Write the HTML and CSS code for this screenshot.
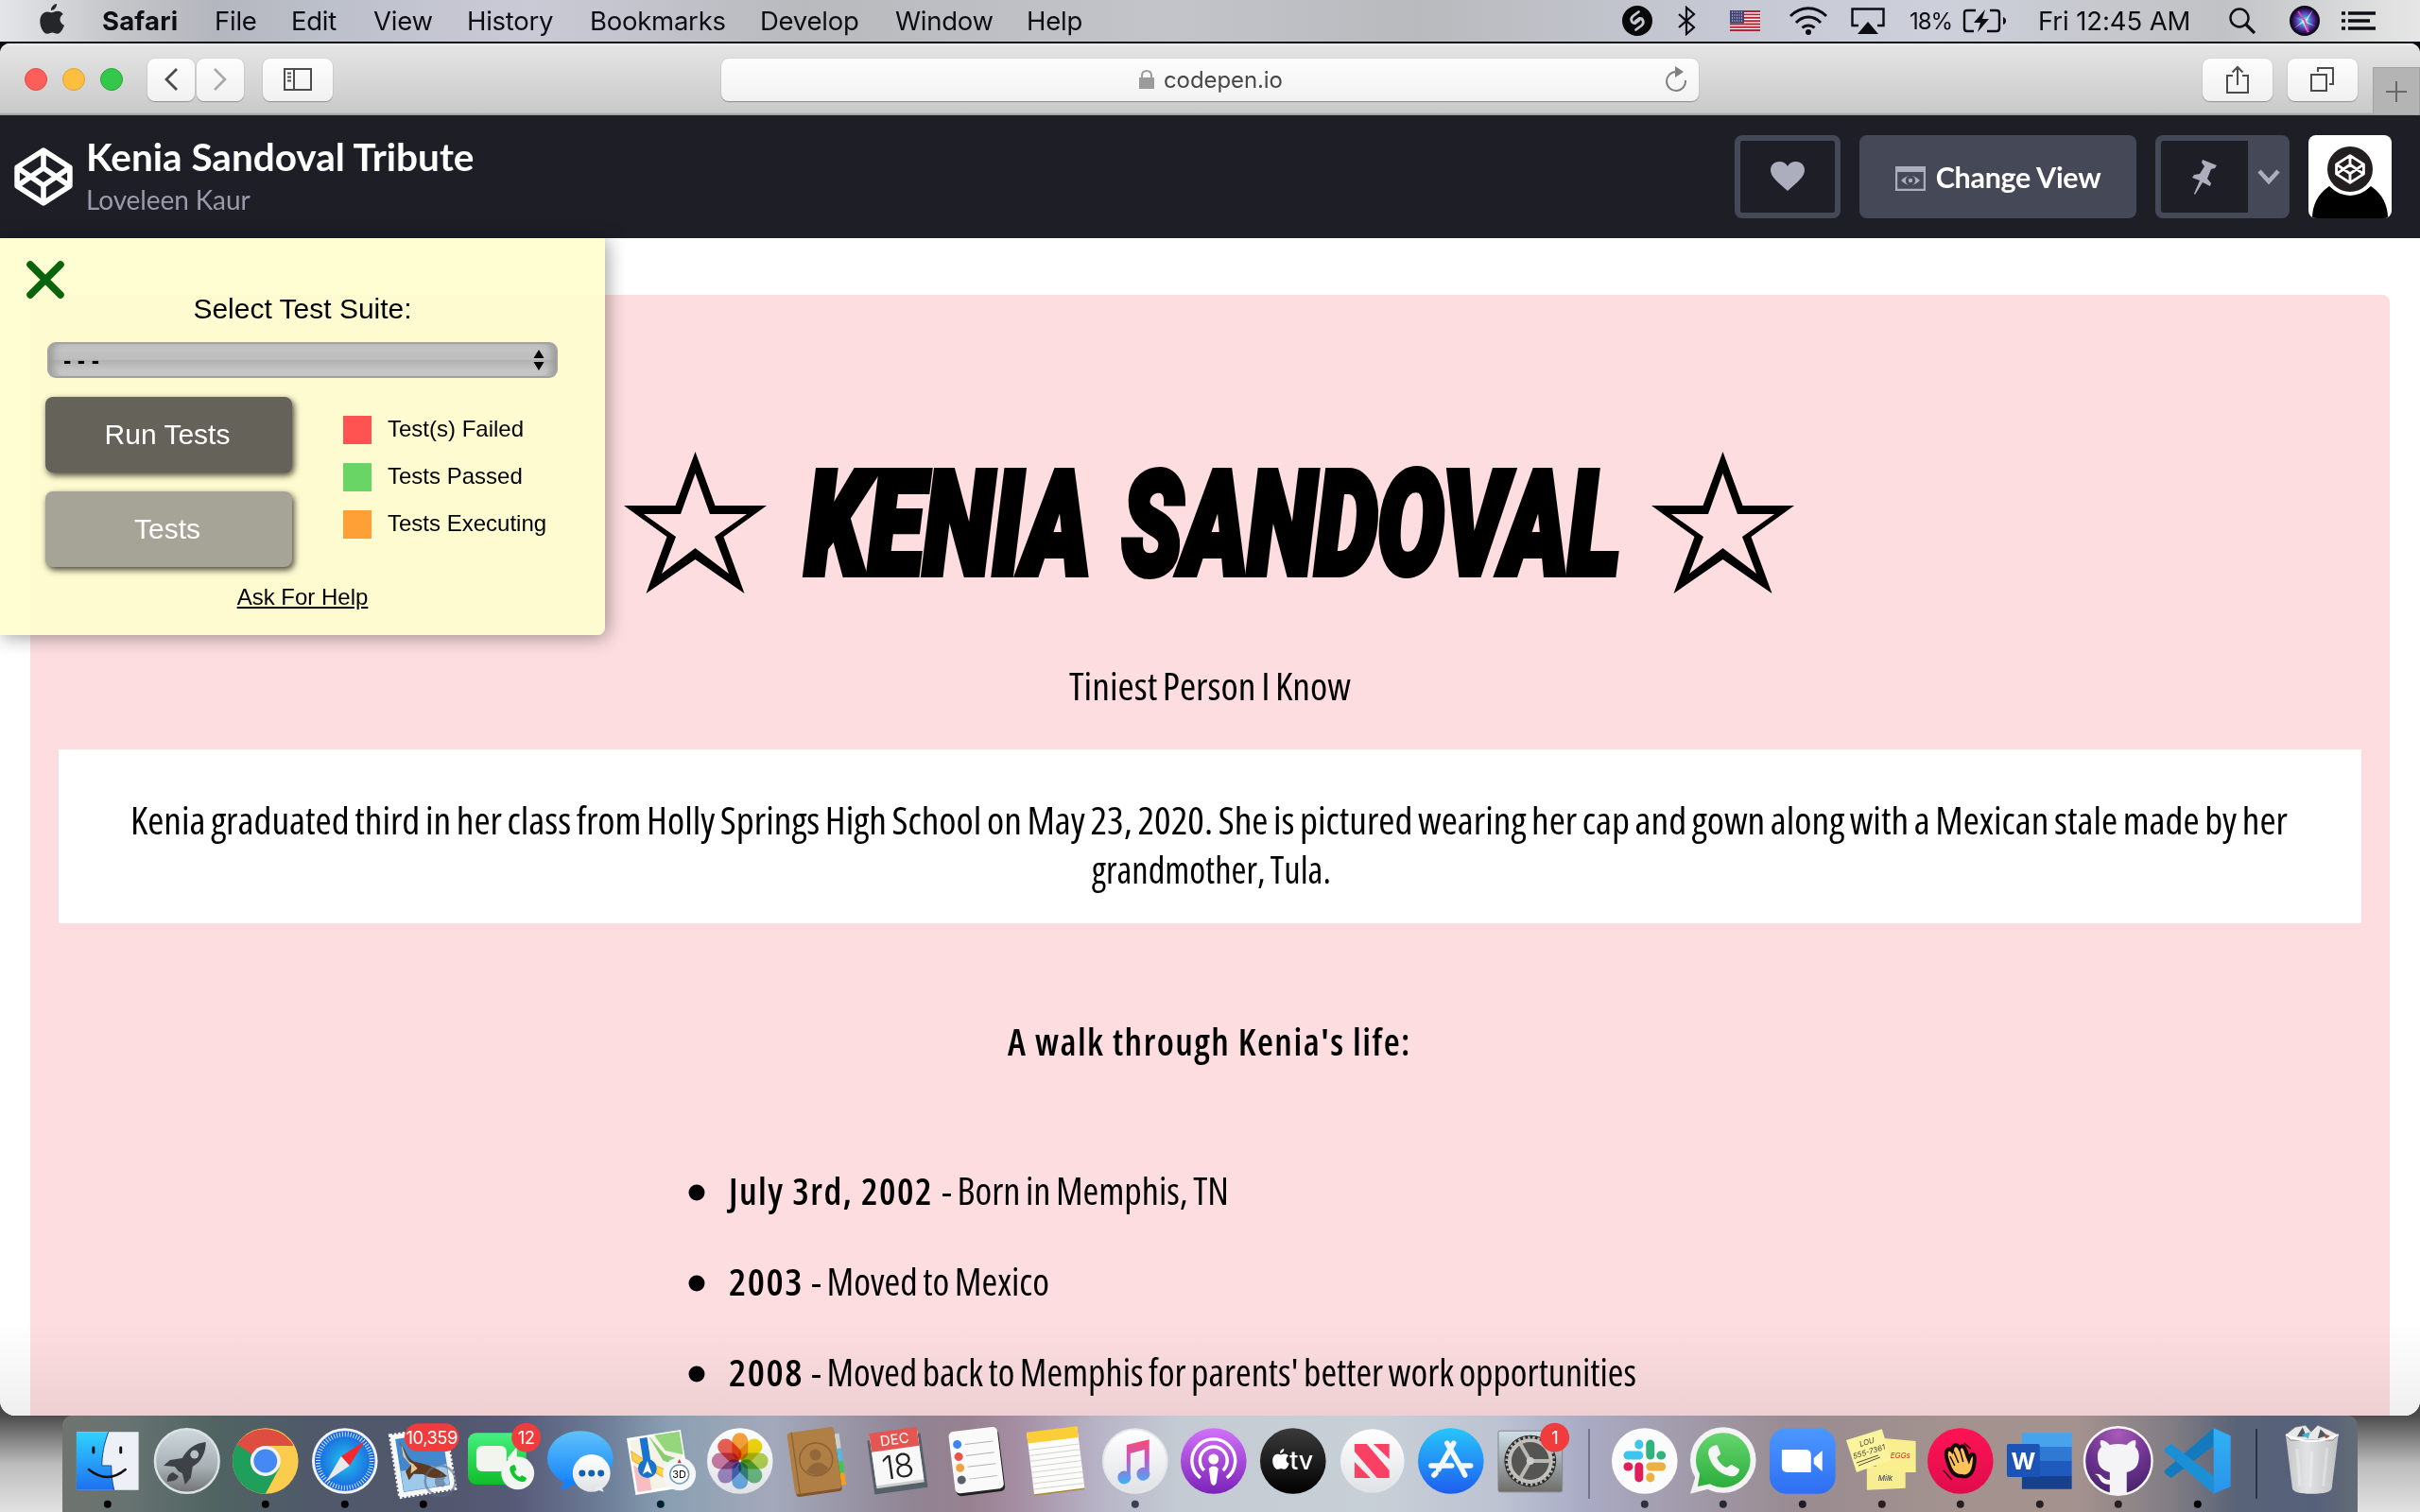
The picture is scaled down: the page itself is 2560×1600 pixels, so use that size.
FILE: index.html
```html
<!DOCTYPE html>
<html lang="en">
<head>
<meta charset="utf-8">
<title>Kenia Sandoval Tribute</title>
<link rel="stylesheet" href="styles.css">
</head>
<body>
<svg width="0" height="0" class="defs">
  <defs>
    <linearGradient id="gSilver" x2="0" y2="1"><stop offset="0" stop-color="#ced9de"/><stop offset=".6" stop-color="#a7b0b4"/><stop offset="1" stop-color="#707274"/></linearGradient>
    <linearGradient id="gFinder" x2="0" y2="1"><stop offset="0" stop-color="#2fd3ff"/><stop offset="1" stop-color="#1e70f0"/></linearGradient>
    <linearGradient id="gWhite" x2="0" y2="1"><stop offset="0" stop-color="#fff"/><stop offset="1" stop-color="#dfe2e6"/></linearGradient>
    <radialGradient id="gSafari"><stop offset="0" stop-color="#22c5ee"/><stop offset="1" stop-color="#1a5fdc"/></radialGradient>
    <linearGradient id="gGreen" x2="0" y2="1"><stop offset="0" stop-color="#45f080"/><stop offset="1" stop-color="#10bd28"/></linearGradient>
    <linearGradient id="gBlue" x2="0" y2="1"><stop offset="0" stop-color="#5fc2fb"/><stop offset="1" stop-color="#1482fb"/></linearGradient>
    <linearGradient id="gStore" x2="0" y2="1"><stop offset="0" stop-color="#28c6fb"/><stop offset="1" stop-color="#1d5df0"/></linearGradient>
    <linearGradient id="gPod" x2="0" y2="1"><stop offset="0" stop-color="#d272fa"/><stop offset="1" stop-color="#7b22b8"/></linearGradient>
    <linearGradient id="gTv" x2="0" y2="1"><stop offset="0" stop-color="#3b3b3b"/><stop offset="1" stop-color="#000"/></linearGradient>
    <linearGradient id="gNote" x2="0" y2="1"><stop offset="0" stop-color="#fb4b70"/><stop offset=".45" stop-color="#c158c8"/><stop offset="1" stop-color="#3db2f5"/></linearGradient>
    <linearGradient id="gPref" x2="0" y2="1"><stop offset="0" stop-color="#cfe0ea"/><stop offset="1" stop-color="#6f6d69"/></linearGradient>
    <linearGradient id="gZoom" x2="0" y2="1"><stop offset="0" stop-color="#4b98ff"/><stop offset="1" stop-color="#2e6ff3"/></linearGradient>
    <linearGradient id="gWa" x2="0" y2="1"><stop offset="0" stop-color="#65d56f"/><stop offset="1" stop-color="#2cae3c"/></linearGradient>
    <linearGradient id="gHey" x2="0" y2="1"><stop offset="0" stop-color="#ff1355"/><stop offset="1" stop-color="#e00c4c"/></linearGradient>
    <radialGradient id="gGit" cy=".1" r="1"><stop offset="0" stop-color="#a95bb8"/><stop offset=".5" stop-color="#6d3390"/><stop offset="1" stop-color="#3c2060"/></radialGradient>
    <linearGradient id="gCode" x2="0" y2="1"><stop offset="0" stop-color="#2fb2f5"/><stop offset="1" stop-color="#2c93ea"/></linearGradient>
    <linearGradient id="gTrash"><stop offset="0" stop-color="#c9caca"/><stop offset=".4" stop-color="#eaeaea"/><stop offset="1" stop-color="#c6c6c6"/></linearGradient>
    <radialGradient id="gSiri"><stop offset="0" stop-color="#bff"/><stop offset=".3" stop-color="#3aa4d8"/><stop offset=".65" stop-color="#5a2aa8"/><stop offset="1" stop-color="#0a0820"/></radialGradient>
    <symbol id="cp" viewBox="0 0 100 100"><path d="M50 5 95 34V66L50 95 5 66V34ZM50 5V35M50 65V95M5 34 50 65 95 34M5 66 50 35 95 66" fill="none" stroke="currentColor" stroke-width="9" stroke-linejoin="round"/></symbol>
    <symbol id="apple" viewBox="0 0 26 32"><path d="M18 0c.3 3.500-2.500 7-6 7C11.600 3.500 14.800.5 18 0ZM13 9.300c1.500 0 3-1.500 6-1.500 2.200 0 4.500 1.200 5.800 3.300-5 3-4.200 9.600 1.200 11.600-1.300 4-4.300 9.100-7.300 9.100-2 0-3-1.300-5.300-1.300s-3.500 1.300-5.300 1.300C4 31.800.3 24.500.3 18.400c0-6.300 3.800-10 7.700-10 2.200 0 3.700.9 5 .9Z" fill="currentColor"/></symbol>
    <symbol id="phone" viewBox="0 0 40 40"><path d="M7 4 12 2c1 0 2 1 3 4l2 6c0 2-4 3-4 5 2 5 6 9 11 11 2 0 4-4 6-3l7 4c2 1 2 2 1 4-2 4-5 6-10 5C14 35 5 24 3 12c0-4 1-6 4-8Z" fill="currentColor"/></symbol>
  </defs>
</svg>

<header class="menubar">
  <svg class="apple" viewBox="0 0 26 32"><use href="#apple"/></svg>
  <nav class="menus"><b>Safari</b><span>File</span><span>Edit</span><span>View</span><span>History</span><span>Bookmarks</span><span>Develop</span><span>Window</span><span>Help</span></nav>
  <div class="status">
    <svg class="shazam" viewBox="0 0 32 32"><circle cx="16" cy="16" r="16" fill="#08080b"/><path d="M17.500 6.500 11.500 11C8 14 10 19 14 18.500L18 15.500M14.500 25.500 20.500 21C24 18 22 13 18 13.500L14 16.500" fill="none" stroke="#c5c8d2" stroke-width="2.800" stroke-linecap="round"/></svg>
    <svg class="bt" viewBox="0 0 20 32"><path d="M2 9 18 23 10 30V2L18 9 2 23" fill="none" stroke="#0c0e14" stroke-width="2.200"/></svg>
    <svg class="flag" viewBox="0 0 32 22"><path d="M0 0H32V22H0Z" fill="#fff"/><path d="M0 1H32M0 4.400H32M0 7.800H32M0 11.200H32M0 14.500H32M0 17.800H32M0 21H32" stroke="#b22234" stroke-width="1.900"/><path d="M0 0H15V13.600H0Z" fill="#3f4275"/><path d="M2 2H14M2 5H14M2 8H14M2 11H14" stroke="#fff" stroke-width="1.200" stroke-dasharray="1 1.500"/></svg>
    <svg class="wifi" viewBox="0 0 42 30"><path d="M2 10C13-1 29-1 40 10M8 17C15.500 9 26.500 9 34 17M14.500 22.500C18 19 24 19 27.500 22.500" fill="none" stroke="#0c0e14" stroke-width="3"/><circle cx="21" cy="27" r="3" fill="#0c0e14"/></svg>
    <svg class="air" viewBox="0 0 36 29"><path d="M8 19H1.500V1.500H34.500V19H28" fill="none" stroke="#0c0e14" stroke-width="2.400"/><path d="M18 15 29 28H7Z" fill="#0c0e14"/></svg>
    <span class="pct">18%</span>
    <svg class="batt" viewBox="0 0 46 26"><path d="M14 2H5Q2 2 2 5V21Q2 24 5 24H12M29 2H36Q39 2 39 5V21Q39 24 36 24H26" fill="none" stroke="#0c0e14" stroke-width="2.400"/><path d="M43 9Q46 10 46 13T43 17Z" fill="#0c0e14"/><path d="M24 1 12 15H19L16 25 28 11H21Z" fill="#0c0e14"/></svg>
    <span class="clock">Fri 12:45 AM</span>
    <svg class="mag" viewBox="0 0 28 28"><circle cx="11" cy="11" r="9.500" fill="none" stroke="#0c0e14" stroke-width="2.400"/><path d="M18 18 27 27" stroke="#0c0e14" stroke-width="3.200"/></svg>
    <svg class="siri" viewBox="0 0 32 32"><circle cx="16" cy="16" r="16" fill="#111"/><circle cx="16" cy="16" r="14.500" fill="url(#gSiri)"/><path d="M4 12 16 16 25 4 18 17 28 22 17 18 19 29 14 18 5 24 14 16Z" fill="#e8f8ff" opacity=".8"/><path d="M9 6 16 16 20 28" stroke="#e83fa8" stroke-width="2" fill="none"/></svg>
    <svg class="list" viewBox="0 0 36 20"><path d="M0 2H4M7 2H36M0 10H4M7 10H30M0 18H4M7 18H36" stroke="#0c0e14" stroke-width="3.600"/></svg>
  </div>
</header>

<main class="window">
  <div class="toolbar">
    <div class="lights"><i class="red"></i><i class="yellow"></i><i class="green"></i></div>
    <div class="navs">
      <div class="btn nav"><svg width="16" height="26" viewBox="0 0 16 26"><path d="M14 2 3 13 14 24" fill="none" stroke="#4a4a4a" stroke-width="2.800"/></svg></div>
      <div class="btn nav"><svg width="16" height="26" viewBox="0 0 16 26"><path d="M2 2 13 13 2 24" fill="none" stroke="#a9a9a9" stroke-width="2.600"/></svg></div>
    </div>
    <div class="btn side"><svg width="30" height="24" viewBox="0 0 30 24"><path d="M1 1H29V23H1ZM11 1V23M4 5.500H8M4 9.500H8M4 13.500H8" fill="none" stroke="#4c4c4c" stroke-width="2"/></svg></div>
    <div class="address">
      <svg class="lock" viewBox="0 0 16 20"><path d="M3 9V6Q3 1 8 1T13 6V9" fill="none" stroke="#9b9b9b" stroke-width="2"/><path d="M0 8H16V20H0Z" fill="#9b9b9b"/></svg>
      <span>codepen.io</span>
      <svg class="reload" viewBox="0 0 24 28"><path d="M12 6A10 10 0 1 0 22 15" fill="none" stroke="#808080" stroke-width="2"/><path d="M11 0 20 6 11 12Z" fill="#808080"/></svg>
    </div>
    <div class="right">
      <div class="btn tool"><svg width="24" height="30" viewBox="0 0 24 30"><path d="M7 11H1V29H23V11H17M12 21V2M6.500 7.500 12 2 17.500 7.500" fill="none" stroke="#4c4c4c" stroke-width="2"/></svg></div>
      <div class="btn tool"><svg width="26" height="26" viewBox="0 0 26 26"><path d="M1 8H17V25H1ZM8 5V1H24V18H20" fill="none" stroke="#4c4c4c" stroke-width="2"/></svg></div>
      <div class="plus"><svg width="24" height="24" viewBox="0 0 24 24"><path d="M1 12H23M12 1V23" stroke="#686868" stroke-width="2"/></svg></div>
    </div>
  </div>

  <div class="penbar">
    <svg class="logo"><use href="#cp"/></svg>
    <div class="names"><h2>Kenia Sandoval Tribute</h2><p>Loveleen Kaur</p></div>
    <div class="actions">
      <div class="heart"><svg width="36" height="32" viewBox="0 0 36 32"><path d="M18 31C8 22 0 16 0 9 0-1 14-3 18 5 22-3 36-1 36 9 36 16 28 22 18 31Z" fill="#acaebd"/></svg></div>
      <div class="change"><svg width="32" height="26" viewBox="0 0 32 26"><path d="M1 1H31V25H1Z" fill="none" stroke="#acaebd" stroke-width="2.400"/><path d="M0 0H32V6H0Z" fill="#acaebd"/><path d="M6 15Q16 5 26 15 16 25 6 15Z" fill="#acaebd"/><circle cx="16" cy="15" r="5.200" fill="#444857"/><circle cx="16" cy="15" r="2.200" fill="#acaebd"/></svg><span>Change View</span></div>
      <div class="pin"><div class="pinbox"><svg width="26" height="37" viewBox="0 0 26 37"><path d="M11 0 26 6 24 9 20 10 16 20 20 25 19 28 11 24 3 37 2 36 8 22 0 19 2 16 8 15 13 7 10 3Z" fill="#acaebd"/></svg></div><svg width="24" height="16" viewBox="0 0 24 16"><path d="M2 2 12 13 22 2" fill="none" stroke="#acaebd" stroke-width="4.500"/></svg></div>
      <svg class="avatar" viewBox="0 0 88 88"><path d="M0 0H88V88H0Z" fill="#fff"/><path d="M4 88C4 74 10 62 22 54Q44 72 66 54C78 62 84 74 84 88Z"/><circle cx="44" cy="36" r="28" fill="#fff"/><circle cx="44" cy="36" r="24" fill="#231f20"/><use href="#cp" x="28" y="20" width="32" height="32" color="#fff"/></svg>
    </div>
  </div>

  <div class="page">
    <article class="tribute">
      <div class="title">
        <svg class="star" viewBox="0 0 151 150"><path fill-rule="evenodd" d="M75.500 0 96.500 57H151L105.500 90 127.500 150 75.500 114 23.500 150 45.500 90 0 57H54.500ZM75.500 23 60 66H21L55 90 40 129 75.500 102 111 129 96 90 130 66H91Z"/></svg>
        <svg class="name" viewBox="0 0 936 150"><text transform="translate(41 129) scale(.7 1)" textLength="431" lengthAdjust="spacingAndGlyphs">KENIA</text><text transform="translate(376 129) scale(.69 1)" textLength="764" lengthAdjust="spacingAndGlyphs">SANDOVAL</text></svg>
        <svg class="star" viewBox="0 0 151 150"><path fill-rule="evenodd" d="M75.500 0 96.500 57H151L105.500 90 127.500 150 75.500 114 23.500 150 45.500 90 0 57H54.500ZM75.500 23 60 66H21L55 90 40 129 75.500 102 111 129 96 90 130 66H91Z"/></svg>
      </div>
      <svg class="line tiniest"><text x="1069" y="40" textLength="298" lengthAdjust="spacingAndGlyphs">Tiniest Person I Know</text></svg>
      <div class="caption">
        <svg class="line"><text x="76" y="40" textLength="2282" lengthAdjust="spacingAndGlyphs">Kenia graduated third in her class from Holly Springs High School on May 23, 2020. She is pictured wearing her cap and gown along with a Mexican stale made by her</text></svg>
        <svg class="line"><text x="1093" y="40" textLength="253" lengthAdjust="spacingAndGlyphs">grandmother, Tula.</text></svg>
      </div>
      <svg class="line walk"><text x="1004" y="40" class="bold" textLength="427" lengthAdjust="spacingAndGlyphs">A walk through Kenia's life:</text></svg>
      <div class="life">
        <svg class="line"><circle cx="675" cy="27" r="8.500"/><text class="bold" x="709" y="40" textLength="216" lengthAdjust="spacingAndGlyphs">July 3rd, 2002</text><text x="934" y="40" textLength="304" lengthAdjust="spacingAndGlyphs">- Born in Memphis, TN</text></svg>
        <svg class="line"><circle cx="675" cy="27" r="8.500"/><text class="bold" x="709" y="40" textLength="79" lengthAdjust="spacingAndGlyphs">2003</text><text x="796" y="40" textLength="252" lengthAdjust="spacingAndGlyphs">- Moved to Mexico</text></svg>
        <svg class="line"><circle cx="675" cy="27" r="8.500"/><text class="bold" x="709" y="40" textLength="79" lengthAdjust="spacingAndGlyphs">2008</text><text x="796" y="40" textLength="873" lengthAdjust="spacingAndGlyphs">- Moved back to Memphis for parents' better work opportunities</text></svg>
      </div>
    </article>
    <aside class="tests">
      <svg class="close" viewBox="0 0 40 40"><path d="M4 4 36 36M36 4 4 36" stroke="#0a640d" stroke-width="7.500" stroke-linecap="round"/></svg>
      <p class="pick">Select Test Suite:</p>
      <div class="select"><span>- - -</span><svg width="12" height="22" viewBox="0 0 12 22"><path d="M6 0 11.500 9H.5ZM6 22 11.500 13H.5Z"/></svg></div>
      <div class="cols">
        <div class="buttons"><div class="run">Run Tests</div><div class="run light">Tests</div></div>
        <div class="legend"><p><i class="fail"></i><span>Test(s) Failed</span></p><p><i class="pass"></i><span>Tests Passed</span></p><p><i class="exec"></i><span>Tests Executing</span></p></div>
      </div>
      <p class="help">Ask For Help</p>
    </aside>
    <div class="shade"></div>
  </div>
</main>

<footer class="dock">
  <svg class="app" viewBox="0 0 84 102"><path d="M9 17H75V79H9Z" fill="#edf1f7"/><path d="M9 17H43C38 30 36 42 36 53H46C46 63 47 71 49 79H9Z" fill="url(#gFinder)"/><path d="M43 17C38 30 36 42 36 53H46C46 63 47 71 49 79" fill="none" stroke="#164a90" stroke-width="1"/><path d="M27 34V39M56 34V39" stroke="#111" stroke-width="3" stroke-linecap="round"/><path d="M22 57Q42 73 61 57" fill="none" stroke="#111" stroke-width="2.500" stroke-linecap="round"/><circle cx="42" cy="94" r="4"/></svg>
  <svg class="app" viewBox="0 0 84 102"><circle cx="42" cy="48" r="34" fill="url(#gSilver)" stroke="#dbe2e5" stroke-width="2.500"/><path d="M62 28C50 29 42 36 37 45L24 47 17 53 29 54 33 59 37 61 40 73 46 66 48 54C57 49 62 40 62 28ZM27 60 33 64C31 70 26 69 21 70 21 65 22 62 27 60Z" fill="#3e4246"/><circle cx="50" cy="41" r="4.500" fill="#b7c0c4"/></svg>
  <svg class="app" viewBox="0 0 84 102"><circle cx="42" cy="48" r="35" fill="#fccd4d"/><path d="M42 48 12 30A35 35 0 0 1 72 32H42Z" fill="#dd4d40"/><path d="M12 30A35 35 0 0 0 42 83L57 55 29 55Z" fill="#209f5c"/><path d="M12 30 42 32 42 48 30 58Z" fill="#dd4d40"/><path d="M12 30 28 58 42 55 30 43Z" fill="#209f5c"/><circle cx="42" cy="48" r="16" fill="#f4f4f4"/><circle cx="42" cy="48" r="12.500" fill="#4688f4"/><circle cx="42" cy="94" r="4"/></svg>
  <svg class="app" viewBox="0 0 84 102"><circle cx="42" cy="48" r="35" fill="#f1f3f5"/><circle cx="42" cy="48" r="32" fill="url(#gSafari)"/><circle cx="42" cy="48" r="28.500" fill="none" stroke="#cdeafb" stroke-width="5" stroke-dasharray="1 1.980"/><path d="M63 27 47 53 38 43Z" fill="#f3272f"/><path d="M22 70 38 43 47 53Z" fill="#e9e9eb"/><circle cx="42" cy="94" r="4"/></svg>
  <svg class="app" viewBox="0 0 84 102"><g transform="rotate(-9 42 50)"><path d="M14 18H69V80H14Z" fill="#4388cd" stroke="#f8f8f8" stroke-width="5"/><path d="M17 55H66V77H17Z" fill="#9fc9ea"/><path d="M11.500 15.500H71.500V82.500H11.500Z" fill="none" stroke="#f8f8f8" stroke-width="3" stroke-dasharray="2.500 2"/><path d="M20 24C26 32 25 42 32 47L42 51C53 56 60 62 65 68 53 70 45 67 40 62L30 60 24 66 22 56 29 50Z" fill="#5f3a20"/><path d="M22 26C25 40 23 44 31 49L35 55 27 59 29 51 22 40Z" fill="#e5c898"/></g><circle cx="60" cy="69" r="16" fill="none" stroke="#596b86" stroke-width="2.500" opacity=".6"/><use href="#apple" x="54" y="61" width="12" height="15" color="#596b86" opacity=".6"/><rect x="22" y="8" width="58" height="30" rx="15" fill="#f03c3c"/><text x="51" y="30" class="badge">10,359</text><circle cx="42" cy="94" r="4"/></svg>
  <svg class="app" viewBox="0 0 84 102"><rect x="5" y="18" width="62" height="55" rx="9" fill="url(#gGreen)"/><rect x="14" y="32" width="32" height="27" rx="6" fill="#f1f5ee"/><path d="M47 45 57 33V57Z" fill="#f1f5ee"/><circle cx="58" cy="61" r="17.500" fill="#f2f5f2"/><use href="#phone" x="47" y="51" width="22" height="20" color="#10c52e"/><circle cx="67" cy="23" r="15.500" fill="#f03c3c"/><text x="67" y="30" class="badge">12</text></svg>
  <svg class="app" viewBox="0 0 84 102"><ellipse cx="40" cy="45" rx="35" ry="29" fill="url(#gBlue)"/><path d="M24 66Q23 74 17 79 30 77 36 70Z" fill="#1482fb"/><circle cx="52" cy="61" r="20" fill="url(#gWhite)"/><path d="M56 78 65 81 62 74Z" fill="#e8ecf0"/><path d="M42 61h0M52 61h0M62 61h0" stroke="#1560ac" stroke-width="7" stroke-linecap="round"/></svg>
  <svg class="app" viewBox="0 0 84 102"><g transform="rotate(-9 42 50)"><path d="M12 20H67V78H12Z" fill="#f5f2e6" stroke="#fff" stroke-width="3"/><path d="M40 20H67V45L49 38Z" fill="#94d67c"/><path d="M34 20 48 42 67 52V60L45 48Z" fill="#8acb74"/><path d="M13 33 30 48 66 71V77H58L13 43Z" fill="#fbd34b" stroke="#eea92f"/><path d="M13 48 28 60V77H13Z" fill="#f7bdc5"/><path d="M28 21V62" stroke="#1873cf" stroke-width="8"/></g><circle cx="28" cy="56" r="10" fill="#1873cf"/><path d="M28 48 33 62 28 59 23 62Z" fill="#fff"/><circle cx="62" cy="62" r="17.500" fill="#f5f6f8"/><circle cx="62" cy="62" r="10" fill="#fff" stroke="#6f98ac" stroke-width="1.500"/><path d="M62 46 64 50H60Z" fill="#e22"/><text x="62" y="66" class="three">3D</text><circle cx="42" cy="94" r="4" fill="#03202f"/></svg>
  <svg class="app" viewBox="0 0 84 102"><circle cx="42" cy="48" r="35" fill="url(#gWhite)"/><g class="petals"><rect x="33.500" y="18" width="17" height="29" rx="8.500" fill="#f8a23c"/><rect x="33.500" y="18" width="17" height="29" rx="8.500" fill="#f1d60c" transform="rotate(45 42 48)"/><rect x="33.500" y="18" width="17" height="29" rx="8.500" fill="#b5d555" transform="rotate(90 42 48)"/><rect x="33.500" y="18" width="17" height="29" rx="8.500" fill="#70bf83" transform="rotate(135 42 48)"/><rect x="33.500" y="18" width="17" height="29" rx="8.500" fill="#73b3ea" transform="rotate(180 42 48)"/><rect x="33.500" y="18" width="17" height="29" rx="8.500" fill="#a48cc8" transform="rotate(225 42 48)"/><rect x="33.500" y="18" width="17" height="29" rx="8.500" fill="#cf7ea8" transform="rotate(270 42 48)"/><rect x="33.500" y="18" width="17" height="29" rx="8.500" fill="#ed6052" transform="rotate(315 42 48)"/></g></svg>
  <svg class="app" viewBox="0 0 84 102"><g transform="rotate(-8 42 50)"><path d="M60 22H68V38H60Z" fill="#ccd0cf"/><path d="M60 38H68V51H60Z" fill="#54b9e6"/><path d="M60 51H68V64H60Z" fill="#42c457"/><path d="M60 64H68V77H60Z" fill="#f2a01b"/><rect x="14" y="15" width="49" height="68" rx="3" fill="#82552b"/><rect x="13" y="14" width="50" height="66" rx="4" fill="#af7f45"/><path d="M18 14V80" stroke="#8c6231" stroke-width="1.300"/><circle cx="40" cy="46" r="17.500" fill="none" stroke="#8d6230" stroke-width="1.500"/><circle cx="40" cy="41" r="6" fill="#92673a"/><path d="M28 57Q40 42 52 57 40 69 28 57Z" fill="#92673a"/></g></svg>
  <svg class="app" viewBox="0 0 84 102"><g transform="rotate(-8 42 50)"><path d="M13 22H70V80H13Z" fill="#566069"/><path d="M16 19H67V74H16Z" fill="#cfcfcf"/><path d="M16 18H67V71H16Z" fill="#f8f8f8"/><path d="M16 15H67V35H16Z" fill="#e55552"/><text x="42" y="30" class="dec">DEC</text><text x="41" y="66" class="day">18</text></g></svg>
  <svg class="app" viewBox="0 0 84 102"><g transform="rotate(-7 42 48)"><rect x="16" y="17" width="52" height="66" rx="5" fill="#222"/><rect x="15" y="14" width="52" height="66" rx="5" fill="#fafafa"/><path d="M31 29H61M31 41H61M31 53H61M31 66H61" stroke="#b3b3b3"/><circle cx="23" cy="28" r="4.500" fill="#3c84f5"/><circle cx="23" cy="41" r="4.500" fill="#ec514b"/><circle cx="23" cy="53" r="4.500" fill="#f1a13e"/><circle cx="23" cy="66" r="4.500" fill="#596069"/></g></svg>
  <svg class="app" viewBox="0 0 84 102"><g transform="rotate(-7 42 48)"><path d="M15 15H69V81H15Z" fill="#fcfcfa"/><path d="M15 14H69V26H15Z" fill="#fbce38"/><path d="M15 33H69M15 39H69M15 45H69M15 51H69M15 57H69M15 63H69M15 69H69M15 75H69" stroke="#d3d3cf"/><path d="M15 81H69" stroke="#ab8a2f" stroke-width="1.500"/></g></svg>
  <svg class="app" viewBox="0 0 84 102"><circle cx="42" cy="48" r="34" fill="url(#gWhite)" stroke="#e4e6ea" stroke-width="2"/><path d="M33 31 57 25V59A7 7 0 1 1 52 55V36L37 40V63A7 7 0 1 1 33 59Z" fill="url(#gNote)"/><circle cx="42" cy="94" r="4" fill="#3b4052"/></svg>
  <svg class="app" viewBox="0 0 84 102"><circle cx="42" cy="48" r="35" fill="url(#gPod)"/><path d="M28 66A23 23 0 1 1 56 66M32 58A14.500 14.500 0 1 1 52 58" fill="none" stroke="#fff" stroke-width="3.500"/><circle cx="42" cy="46" r="5.500" fill="#fff"/><path d="M37 56Q42 51 47 56L45 71Q42 77 39 71Z" fill="#fff"/></svg>
  <svg class="app" viewBox="0 0 84 102"><circle cx="42" cy="48" r="35" fill="url(#gTv)"/><use href="#apple" x="20" y="35" width="18" height="22" color="#fff"/><text x="51" y="57" class="tv">tv</text></svg>
  <svg class="app" viewBox="0 0 84 102"><circle cx="42" cy="48" r="34" fill="url(#gWhite)"/><path d="M23 30H36L60 58V66H47L23 38ZM43 30H60V46ZM23 49 40 66H23Z" fill="#fb4163"/></svg>
  <svg class="app" viewBox="0 0 84 102"><circle cx="42" cy="48" r="35" fill="url(#gStore)"/><path d="M45 29 29 57M26 61 24 63M38 29 55 59 57 63M21 53H43M52 53H63" stroke="#f4f8fb" stroke-width="5.500" stroke-linecap="round"/></svg>
  <svg class="app" viewBox="0 0 84 102"><rect x="8" y="16" width="68" height="65" rx="2" fill="url(#gPref)" stroke="#82878b"/><circle cx="42" cy="48" r="27.500" fill="#292a2b"/><circle cx="42" cy="48" r="22" fill="#555654" stroke="#c2c1bc" stroke-width="4"/><circle cx="42" cy="48" r="25" fill="none" stroke="#b5b4b0" stroke-width="3" stroke-dasharray="2.500 2.700"/><path d="M42 48H64M42 48 31 29M42 48 31 67" stroke="#b9b7b2" stroke-width="4"/><circle cx="42" cy="48" r="4" fill="#ccc"/><circle cx="68" cy="23" r="15.500" fill="#f03c3c"/><text x="68" y="30" class="badge">1</text></svg>
  <div class="divider"></div>
  <svg class="app" viewBox="0 0 84 102"><circle cx="42" cy="48" r="35" fill="#fbfbfb"/><g stroke-width="9" stroke-linecap="round"><path d="M24 42H36M36 30V31" stroke="#3dc5ef"/><path d="M48 30V42M59 42H60" stroke="#32b37c"/><path d="M36 54V66M24 54H25" stroke="#e01e5a"/><path d="M48 54H60M48 66V65" stroke="#ebb03d"/></g><circle cx="42" cy="94" r="4" fill="#2f3040"/></svg>
  <svg class="app" viewBox="0 0 84 102"><path d="M14 60 7 83 30 77Z" fill="#f3f3f3"/><circle cx="42" cy="47" r="35" fill="#f3f3f3"/><path d="M18 57 15 75 34 71Z" fill="#2fb03f"/><circle cx="42" cy="47" r="29" fill="url(#gWa)"/><use href="#phone" x="23" y="29" width="38" height="37" color="#f5f5f5"/><circle cx="42" cy="94" r="4" fill="#2a2735"/></svg>
  <svg class="app" viewBox="0 0 84 102"><rect x="7" y="13" width="70" height="70" rx="18" fill="url(#gZoom)"/><path d="M20 36H45Q51 36 51 42V60H26Q20 60 20 54ZM54 45 63 37V59L54 51Z" fill="#fff"/><circle cx="42" cy="94" r="4" fill="#211c24"/></svg>
  <svg class="app" viewBox="0 0 84 102"><path d="M26 54H67V77L26 79Z" fill="#f8ee91"/><path d="M36 23 78 27V60H36Z" fill="#faef8e"/><path d="M4 26 42 14 52 47 15 60Z" fill="#fbf39e"/><g class="scribble"><text x="19" y="33" transform="rotate(-17 19 33)">LOU</text><text x="12" y="46" transform="rotate(-17 12 46)">555-7361</text><text x="51" y="45" fill="#d2342a">EGGs</text><text x="38" y="69" fill="#20305e">Milk</text></g><path d="M15 50 38 42M17 53 40 44" stroke="#55503a"/><circle cx="42" cy="94" r="4" fill="#2a1d1e"/></svg>
  <svg class="app" viewBox="0 0 84 102"><circle cx="42" cy="48" r="35" fill="url(#gHey)"/><path d="M28 47C25 37 29 33 33 37L34 33C37 29 40 32 41 34 44 30 47 33 49 41L51 46C54 37 58 41 57 48 56 63 49 66 43 64 34 64 31 57 28 47Z" fill="#fdc35a" stroke="#160b08" stroke-width="4"/><path d="M35 38 40 50M41 35 45 49M31 43 36 53" stroke="#160b08" stroke-width="1.500"/><path d="M46 29 53 35M24 58 33 68" stroke="#34050f" stroke-width="1.500"/><circle cx="42" cy="94" r="4" fill="#2a1d1e"/></svg>
  <svg class="app" viewBox="0 0 84 102"><path d="M23 18H76V33H23Z" fill="#47a3ec"/><path d="M23 33H76V48H23Z" fill="#2f79d3"/><path d="M23 48H76V64H23Z" fill="#1f5bbc"/><path d="M23 64H76V78H23Z" fill="#17418f"/><rect x="7" y="30" width="35" height="35" rx="2" fill="#1c54b5"/><text x="24.500" y="57" class="word">W</text><circle cx="42" cy="94" r="4" fill="#2a1d1e"/></svg>
  <svg class="app" viewBox="0 0 84 102"><circle cx="42" cy="48" r="36" fill="url(#gGit)" stroke="#f6f6f6" stroke-width="2.500"/><path d="M33 83V68C24 68 26 60 17 62 24 64 21 73 33 73V60C24 58 20 53 20 43 20 38 22 35 24 33 22 29 23 26 24 26 28 26 31 29 33 31Q42 29 51 31C53 29 56 26 60 26 61 27 61 30 60 33 63 36 64 39 64 43 64 53 60 58 51 60V83Q42 86 33 83Z" fill="#f4f3f5"/><circle cx="42" cy="94" r="4" fill="#2a1d1e"/></svg>
  <svg class="app" viewBox="0 0 84 102"><path d="M59 13 7 58Q6 60 8 62L14 66 59 32Z" fill="#137bbd"/><path d="M59 83 7 38Q6 36 8 34L14 30 59 64Z" fill="#1c90d6"/><path d="M59 13 77 21V75L59 83Z" fill="url(#gCode)"/><circle cx="42" cy="94" r="4"/></svg>
  <div class="divider wide"></div>
  <svg class="app" viewBox="0 0 84 102"><path d="M14 20H70L63 77Q62 83 42 83T21 77Z" fill="url(#gTrash)" opacity=".95"/><path d="M14 20 24 12 35 10 41 17 48 10 60 15 70 20 64 26H19Z" fill="#e8e8e8" stroke="#777" stroke-width=".8"/><path d="M26 22 32 12 36 22ZM48 24 51 14 58 21Z" fill="#4f5660"/><path d="M31 20 40 17 38 24Z" fill="#43b3d9"/><path d="M54 19 61 21 57 25Z" fill="#a25339"/><path d="M14 20Q42 34 70 20" fill="none" stroke="#fff" stroke-width="2"/><path d="M26 35 29 75M42 38 40 76M58 34 54 75" stroke="#fff" stroke-width="3" opacity=".3"/></svg>
</footer>
</body>
</html>
```
FILE: styles.css
```css
* { box-sizing: border-box; }
body {
  margin: 0; width: 2560px; height: 1600px; overflow: hidden;
  display: flex; flex-direction: column;
  background: linear-gradient(#0b0d14 0 1400px, #4c4c4c 1498px, #bdbdbd 1550px, #e2e2e2 1600px);
  font-family: Inter, "Liberation Sans", sans-serif;
}
p, h2 { margin: 0; font-weight: 400; }
.defs { position: absolute; }

/* menu bar */
.menubar {
  height: 44px; margin-bottom: 2px; display: flex; align-items: center; flex: none;
  color: #0c0e14; font-size: 27.5px;
  background: linear-gradient(90deg, #e4e5e7, #c4c6ca 120px, #b3b6bd 230px, #bcc0ca 340px, #cacad6 560px, #b9babe 850px, #c3c4ca 1240px, #b9babe 1500px, #c5c8d2 1800px, #cdd0da 2050px, #c1c2c5 2350px, #e6e6e6);
}
.apple { width: 26px; height: 32px; margin: -4px 0 0 42px; color: #252629; }
.menus { display: grid; grid-template-columns: 118px 81px 87px 99px 130px 180px 143px 139px 100px; margin-left: 41px; letter-spacing: -.25px; white-space: nowrap; }
.menus b { font-weight: 700; letter-spacing: .2px; margin-left: -1px; }
.status { flex: 1; display: flex; align-items: center; }
.status svg { flex: none; }
.shazam { width: 32px; height: 32px; margin-left: 530px; }
.bt { width: 20px; height: 32px; margin-left: 26px; }
.flag { width: 32px; height: 22px; margin-left: 36px; }
.wifi { width: 42px; height: 30px; margin-left: 30px; }
.air { width: 36px; height: 29px; margin-left: 24px; }
.pct { width: 48px; margin-left: 26px; font-size: 24px; letter-spacing: -1px; }
.batt { width: 46px; height: 26px; margin-left: 8px; }
.clock { width: 162px; margin-left: 34px; letter-spacing: -.1px; white-space: nowrap; }
.mag { width: 28px; height: 28px; margin-left: 40px; }
.siri { width: 32px; height: 32px; margin-left: 36px; }
.list { width: 36px; height: 20px; margin-left: 23px; }

/* browser window */
.window { height: 1452px; flex: none; border-radius: 10px 10px 16px 16px; overflow: hidden; background: #fff; }
.toolbar { height: 76px; display: flex; align-items: center; padding-left: 26px; background: linear-gradient(#f3f3f3, #e4e4e4 3px, #cacaca 73px, #a3a3a3 75px); }
.lights { display: flex; gap: 16px; }
.lights i { width: 24px; height: 24px; border-radius: 50%; }
.red { background: #fc5f5a; border: 1px solid #de4a46; }
.yellow { background: #fdbf40; border: 1px solid #dea236; }
.green { background: #34c84a; border: 1px solid #2aa43a; }
.btn { height: 45px; display: flex; align-items: center; justify-content: center; border-radius: 8px; background: linear-gradient(#fdfdfd, #f1f1f1); box-shadow: 0 1px 1px #929292, 0 0 1px #999; }
.navs { display: flex; gap: 2px; margin-left: 26px; }
.nav { width: 50px; }
.side { width: 74px; margin-left: 20px; }
.address { width: 1034px; height: 45px; margin-left: 411px; display: flex; align-items: center; position: relative; border-radius: 8px; padding-left: 442px; background: linear-gradient(#fdfdfd, #f2f2f2); box-shadow: 0 1px 1px #8d8d8d, 0 0 1px #999; color: #484848; font-size: 24px; }
.address span { padding-top: 1px; letter-spacing: -.1px; }
.lock { width: 16px; height: 20px; margin-right: 10px; }
.reload { position: absolute; right: 12px; top: 8px; width: 24px; height: 28px; }
.right { margin-left: auto; display: flex; gap: 16px; align-items: center; }
.tool { width: 74px; }
.plus { width: 50px; height: 50px; margin-top: 24px; display: flex; align-items: center; justify-content: center; background: #b4b4b4; border: 1px solid #a2a2a2; border-bottom: 0; }

/* pen header */
.penbar { height: 130px; display: flex; align-items: center; padding: 0 30px 0 15px; background: #1e1f26; color: #fff; font-family: Lato, sans-serif; }
.logo { width: 62px; height: 64px; }
.names { margin: -3px 0 0 14px; }
.names h2 { font-size: 40.500px; font-weight: 700; line-height: 50px; }
.names p { font-size: 28px; line-height: 40px; color: #9a9aac; letter-spacing: -.1px; }
.actions { margin-left: auto; display: flex; gap: 20px; }
.actions > * { height: 88px; border-radius: 8px; }
.heart { width: 112px; border: 6px solid #444857; display: flex; align-items: center; justify-content: center; }
.change { width: 293px; background: #444857; display: flex; align-items: center; justify-content: center; gap: 11px; font-size: 30.500px; font-weight: 700; letter-spacing: -.3px; }
.change svg { margin-top: 4px; }
.pin { width: 142px; background: #444857; padding: 6px; display: flex; align-items: center; gap: 10px; }
.pinbox { width: 92px; height: 76px; background: #1e1f26; display: flex; align-items: center; justify-content: center; border-radius: 3px 0 0 3px; }
.avatar { width: 88px; }

/* tribute page */
.page { height: 1246px; position: relative; padding: 60px 32px 0; background: #fff; }
.tribute { height: 1186px; padding: 166px 30px 0; border-radius: 8px 8px 0 0; background: #fddde0; }
.title { display: flex; justify-content: center; height: 150px; margin-left: -3px; }
.star { width: 151px; height: 150px; }
.name { width: 936px; height: 150px; overflow: visible; font: italic 900 152px Roboto, sans-serif; stroke: #000; stroke-width: 8px; stroke-linejoin: miter; }
.line { display: block; width: 2436px; height: 50px; font-family: "Open Sans", "Noto Sans", sans-serif; font-size: 40px; font-stretch: 75%; font-weight: 430; word-spacing: -2px; overflow: visible; }
.bold { font-weight: 650; letter-spacing: 1.500px; word-spacing: 0; }
.tiniest { margin-top: 73px; }
.caption { height: 184px; margin-top: 42px; padding-top: 50px; display: flex; flex-direction: column; gap: 2px; background: #fff; }
.walk { margin-top: 100px; }
.life { margin-top: 108px; display: flex; flex-direction: column; gap: 46px; }
.shade { position: absolute; left: 0; right: 0; bottom: 0; height: 100px; background: linear-gradient(transparent, rgba(60, 50, 60, .08)); }

/* test panel, floats over the page */
.tests { position: absolute; left: 0; top: 0; width: 640px; height: 420px; padding: 24px 50px 0 48px; border-radius: 0 0 8px 0; background: rgba(255, 253, 207, .93); box-shadow: 2px 2px 20px rgba(0, 0, 0, .4); font-family: "Liberation Sans", Arial, sans-serif; }
.close { display: block; width: 40px; height: 40px; margin-left: -20px; }
.pick { margin: -7px -1px 0 0; text-align: center; font-size: 30px; line-height: 36px; padding-left: 1px; }
.select { height: 38px; margin: 17px 0 0 2px; display: flex; align-items: center; justify-content: space-between; padding: 0 12px 0 15px; border: 2px solid #a2a2a2; border-radius: 9px; background: linear-gradient(#c8c8c8, #bcbcbc 50%, #b1b1b1 50%, #d2d2d2); box-shadow: inset 8px 0 8px -4px #999, inset -8px 0 8px -4px #999; font-size: 25px; }
.select span { font-weight: 700; letter-spacing: -.2px; }
.cols { display: flex; margin-top: 20px; }
.buttons { display: flex; flex-direction: column; gap: 20px; }
.run { width: 261px; height: 80px; display: flex; align-items: center; justify-content: center; padding-right: 3px; border-radius: 8px; background: #65625a; color: #fff; font-size: 30px; box-shadow: 2px 3px 7px rgba(0, 0, 0, .75); }
.light { background: #a6a497; }
.legend { margin: 20px 0 0 54px; display: flex; flex-direction: column; gap: 20px; font-size: 24px; white-space: nowrap; }
.legend p { height: 30px; display: flex; align-items: center; gap: 17px; line-height: 30px; }
.legend span { padding-bottom: 2px; }
.legend i { width: 30px; height: 30px; }
.fail { background: #fe5350; }
.pass { background: #68d565; }
.exec { background: #fea036; }
.help { margin: 18px -2px 0 0; text-align: center; font-size: 24px; line-height: 28px; text-decoration: underline; }

/* dock */
.dock {
  height: 102px; width: 2428px; margin-left: 66px; padding-left: 6px; display: flex; flex: none; border-radius: 10px 10px 0 0;
  background: linear-gradient(90deg, #70736f, #667371 70px, #506462 160px, #50596a 260px, #51576d 400px, #575a78 480px, #6f819a 580px, #8a9fb2 640px, #a3a9bb 750px, #908493 900px, #98818f 960px, #a58ea3 1010px, #b8b5c8 1100px, #c4cbd3 1180px, #c8d0d7 1380px, #bdc3d2 1520px, #a9abc5 1610px, #a39dae 1700px, #998b91 1830px, #a3928e 2000px, #a4928e 2130px, #817d84 2230px, #596378 2300px, #55607a 2380px, #646b76);
}
.app { width: 83.6px; height: 102px; flex: none; overflow: visible; }
.divider { width: 30px; height: 74px; margin: 14px 0 0 7.600px; background: linear-gradient(90deg, transparent 12px, #73758a 12px 14px, transparent 14px); }
.wide { width: 34px; margin-left: 3.200px; background: linear-gradient(90deg, transparent 16px, #2b3249 16px 18px, transparent 18px); }
.badge { fill: #fff; font-size: 18.500px; text-anchor: middle; letter-spacing: -.5px; }
.three { font-size: 11px; text-anchor: middle; }
.dec { fill: #fff; font-size: 15px; text-anchor: middle; }
.day { fill: #222; font-size: 35px; font-weight: 300; text-anchor: middle; letter-spacing: -1px; }
.tv { fill: #fff; font-size: 27px; font-weight: 500; text-anchor: middle; }
.word { fill: #fff; font-size: 25px; font-weight: 700; text-anchor: middle; }
.scribble { font-size: 8px; font-style: italic; fill: #4a4632; }
.petals rect { mix-blend-mode: multiply; }
```
